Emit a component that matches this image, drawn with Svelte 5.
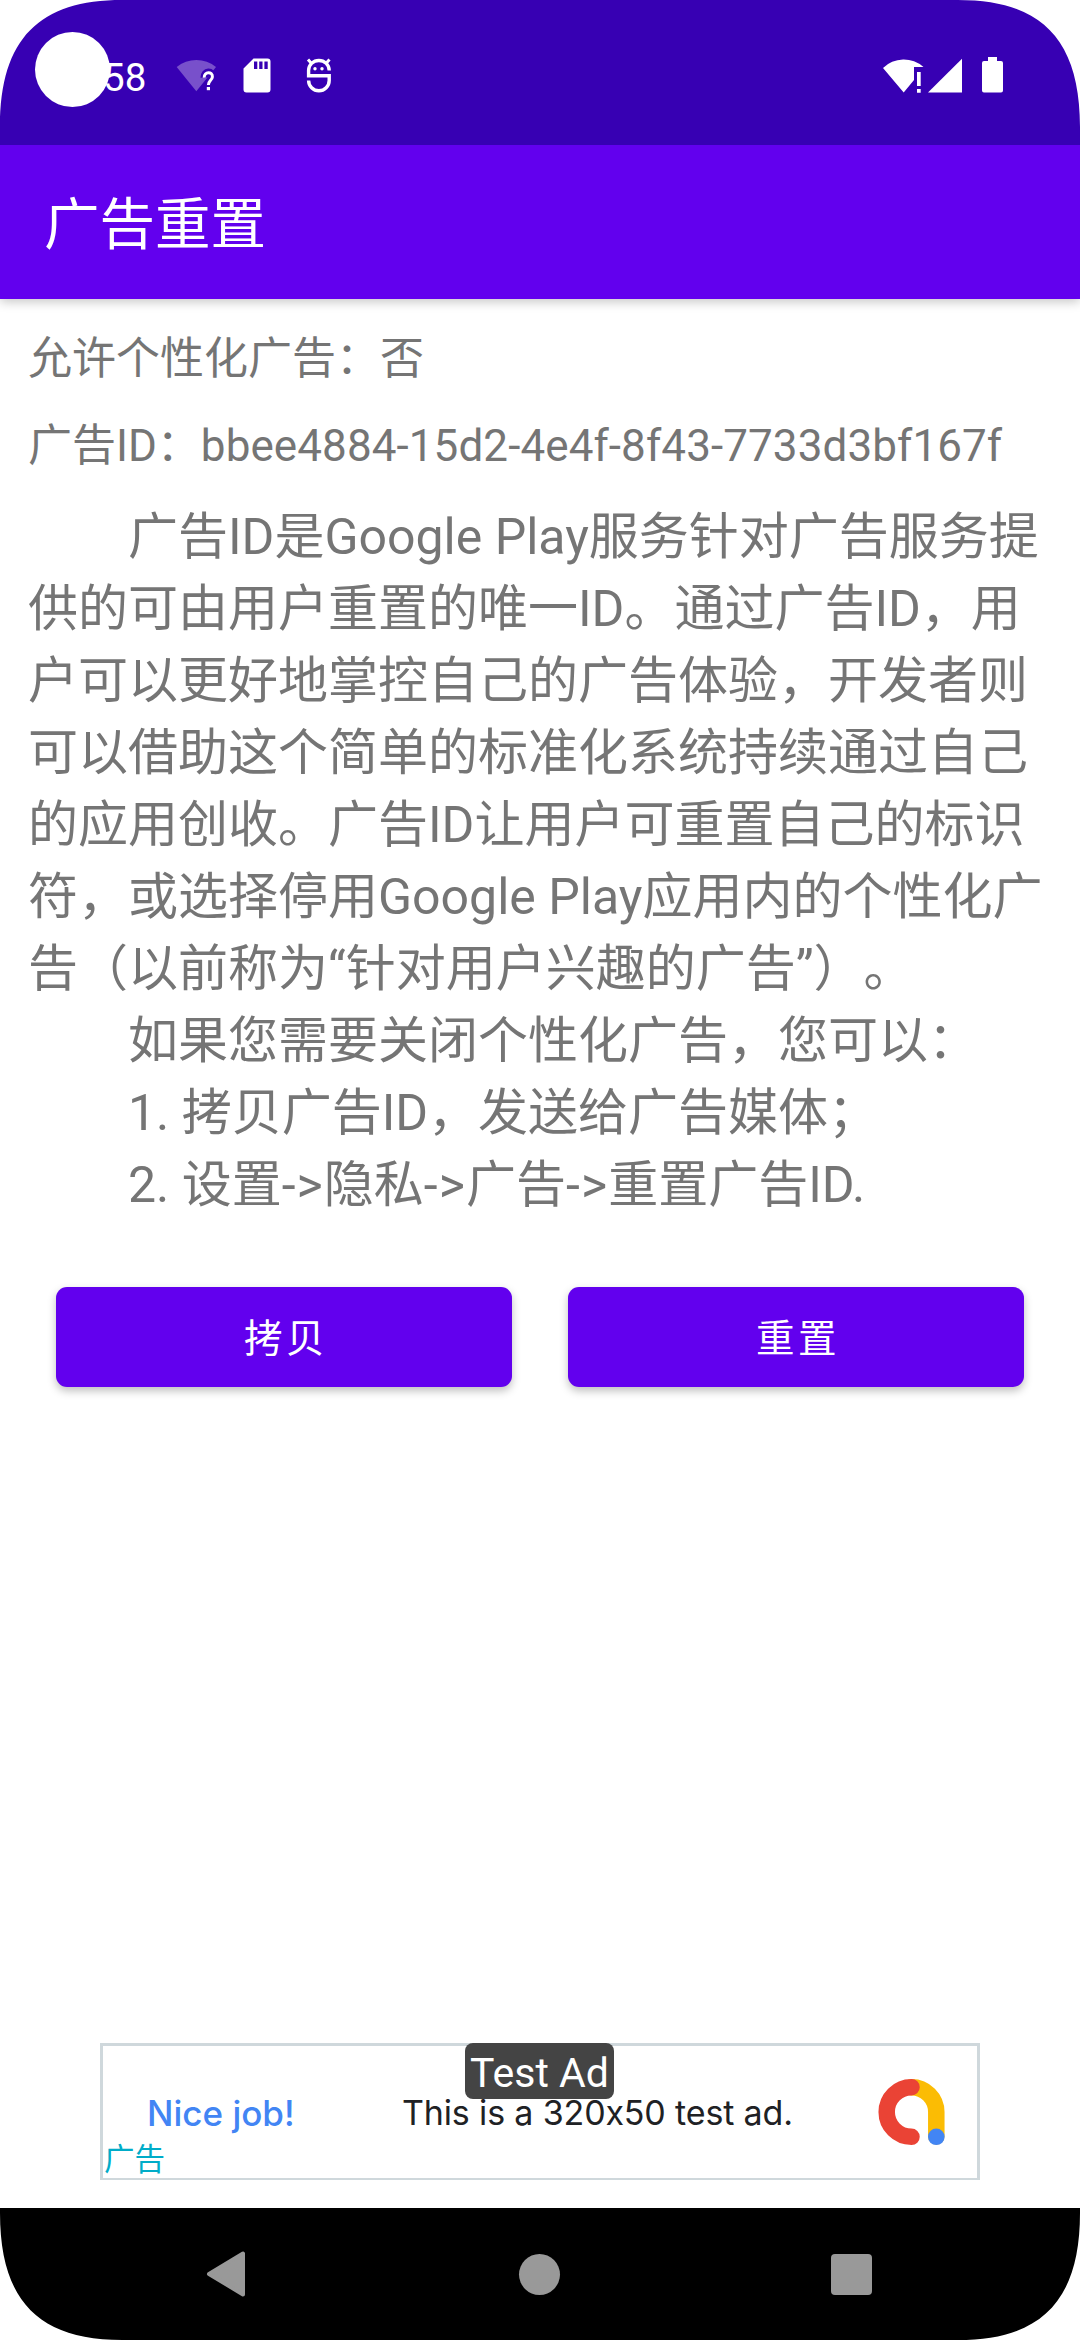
<script>
    let allowed = "否";
    let adId = "bbee4884-15d2-4e4f-8f43-7733d3bf167f";

    let lines = [
        { text: "广告ID是Google Play服务针对广告服务提", indent: true },
        { text: "供的可由用户重置的唯一ID。通过广告ID，用" },
        { text: "户可以更好地掌控自己的广告体验，开发者则" },
        { text: "可以借助这个简单的标准化系统持续通过自己" },
        { text: "的应用创收。广告ID让用户可重置自己的标识" },
        { text: "符，或选择停用Google Play应用内的个性化广" },
        { text: "告（以前称为“针对用户兴趣的广告”）。" },
        { text: "如果您需要关闭个性化广告，您可以：", indent: true },
        { text: "1. 拷贝广告ID，发送给广告媒体；", indent: true }
    ];

    let path = ["设置", "隐私", "广告", "重置广告ID."];
</script>

<div class="screen">
    <div class="status-bar">
        <div class="status-left">
            <span class="clock">58</span>
            <svg class="wifi-unknown" width="42" height="36" viewBox="0 0 42 36">
                <path d="M.7 9A31.1 31.1 0 0 1 40 9L20.3 33.3z" fill="#7850cb" />
                <g fill="none" stroke="#3700b3" stroke-width="7.5">
                    <path d="M28.2 19.6C28 12.6 36.8 12.8 36.4 18.8C36.2 22.2 32.4 22.5 32.4 27" />
                    <path d="M32.4 27v7" />
                </g>
                <path d="M28.2 19.6C28 13.3 36.8 13.3 36.4 18.8C36.2 22.2 32.4 22.5 32.4 27" fill="none" stroke="#fff" stroke-width="3" />
                <path d="M30.8 29h3.2v3.2h-3.2z" fill="#fff" />
            </svg>
            <svg class="sd-card" width="28" height="36" viewBox="0 0 28 36">
                <path d="M10.5.5H24.5a3 3 0 0 1 3 3v28a3 3 0 0 1-3 3H3.5a3 3 0 0 1-3-3V10.5z" fill="#fff" />
                <path d="M11 3.5h3.3v7.5H11zM16.2 3.5h3.3v7.5h-3.3zM21.4 3.5h3.3v7.5h-3.3z" fill="#3700b3" />
            </svg>
            <svg class="debug" width="26" height="36" viewBox="0 0 26 36">
                <path d="M23.2 12.5v-.2a10.3 9.8 0 0 0-20.6 0v5.5h20.6v4.7a10.3 10.3 0 0 1-20.6 0" fill="none" stroke="#fff" stroke-width="3.4" />
                <path d="M2 1.5l4 4.5M23.5 1.5l-4 4.5" stroke="#fff" stroke-width="3" />
                <circle cx="9" cy="10.7" r="1.7" fill="#fff" />
                <circle cx="16" cy="10.7" r="1.7" fill="#fff" />
            </svg>
        </div>
        <div class="status-right">
            <svg class="wifi" width="41" height="36" viewBox="0 0 41 36">
                <path d="M0 10A29.5 29.5 0 0 1 40.5 9H31V22L20.7 34.5z" fill="#fff" />
                <path d="M34 14h3.7v14H34zM34 31h3.7v3.7H34z" fill="#fff" />
            </svg>
            <svg class="signal" width="35" height="36" viewBox="0 0 35 36">
                <path d="M34 .7V34.6H0z" fill="#fff" />
            </svg>
            <svg class="battery" width="21" height="36" viewBox="0 0 21 36">
                <path d="M6 0h9v4h4a2 2 0 0 1 2 2v27.6a2 2 0 0 1-2 2H2a2 2 0 0 1-2-2V6a2 2 0 0 1 2-2h4z" fill="#fff" />
            </svg>
        </div>
        <div class="camera"></div>
    </div>

    <header class="app-bar">
        <h1>广告重置</h1>
    </header>

    <main>
        <p class="info">允许个性化广告：{allowed}</p>
        <p class="info">广告ID：<span class="ad-id">{adId}</span></p>
        <div class="description">
            {#each lines as line}
                <p class:indent={line.indent}>{line.text}</p>
            {/each}
            <p class="indent">2. {#each path as step, i}{#if i > 0}<span class="arrow">-&gt;</span>{/if}{step}{/each}</p>
        </div>
        <div class="buttons">
            <button>拷贝</button>
            <button>重置</button>
        </div>
    </main>

    <div class="ad">
        <span class="ad-title">Nice job!</span>
        <span class="ad-text">This is a 320x50 test ad.</span>
        <svg class="ad-logo" width="68" height="68" viewBox="0 0 68 68">
            <g fill="none" stroke-width="16.5" stroke-linecap="round">
                <path d="M33.5 9.2A24.8 24.8 0 0 1 58.3 34V58.5" stroke="#fbbc04" />
                <path d="M33.5 9.2a24.8 24.8 0 0 0 0 49.6" stroke="#ea4335" />
            </g>
            <circle cx="58.3" cy="58.8" r="8.3" fill="#4285f4" />
        </svg>
        <span class="ad-badge">Test Ad</span>
        <span class="ad-mark">广告</span>
    </div>

    <nav>
        <svg width="41" height="46" viewBox="0 0 41 46">
            <path d="M3 23L37 2.5V43.5z" fill="#999" stroke="#999" stroke-width="4" stroke-linejoin="round" />
        </svg>
        <div class="home"></div>
        <div class="recents"></div>
    </nav>

    <svg class="corner top-left" viewBox="0 0 127 127"><path d="M0 0H122C40 0 0 38 0 127z" /></svg>
    <svg class="corner top-right" viewBox="0 0 127 127"><path d="M0 0H122C40 0 0 38 0 127z" /></svg>
    <svg class="corner bottom-left" viewBox="0 0 127 127"><path d="M0 0H122C40 0 0 38 0 127z" /></svg>
    <svg class="corner bottom-right" viewBox="0 0 127 127"><path d="M0 0H122C40 0 0 38 0 127z" /></svg>
</div>

<style>
    :global(body){
        margin: 0;
        background: #fff;
    }
    .screen{
        position: relative;
        display: flex;
        flex-direction: column;
        width: 1080px;
        height: 2340px;
        overflow: hidden;
        background: #fff;
        font-family: Roboto, "Noto Sans CJK SC", sans-serif;
        color: #757575;
    }
    svg{
        display: block;
        flex: none;
    }
    p, h1{
        margin: 0;
        font-weight: 400;
        white-space: nowrap;
        text-spacing-trim: space-all;
    }

    .status-bar{
        position: relative;
        display: flex;
        justify-content: space-between;
        flex: none;
        height: 145px;
        box-sizing: border-box;
        padding: 58px 77px 0 103px;
        background: #3700b3;
        color: #fff;
    }
    .status-left, .status-right{
        display: flex;
        height: 36px;
    }
    .clock{
        width: 73px;
        font-size: 38.5px;
        line-height: 39px;
    }
    .sd-card{
        margin-left: 25px;
    }
    .debug{
        margin-left: 35px;
    }
    .signal{
        margin-left: 4px;
    }
    .battery{
        margin: -1px 0 0 19px;
    }
    .camera{
        position: absolute;
        left: 35px;
        top: 32px;
        width: 75px;
        height: 75px;
        border-radius: 50%;
        background: #fff;
    }

    .app-bar{
        display: flex;
        align-items: center;
        flex: none;
        height: 154px;
        box-sizing: border-box;
        padding: 7px 0 0 44px;
        background: #6200ee;
        color: #fff;
        box-shadow: 0 3px 10px rgba(0,0,0,0.22);
    }
    h1{
        font-size: 55.5px;
        line-height: 64px;
    }

    main{
        flex: 1;
        padding: 30px 28px 0;
    }
    .info{
        height: 60px;
        margin-bottom: 27px;
        font-size: 44px;
        line-height: 60px;
    }
    .info + .info{
        margin-bottom: 25px;
    }
    .ad-id{
        letter-spacing: 0.09px;
    }
    .description{
        font-size: 50px;
        line-height: 72px;
    }
    .description p{
        height: 72px;
    }
    .indent{
        padding-left: 100px;
    }
    .arrow{
        font-kerning: none;
        letter-spacing: 1.1px;
    }
    .buttons{
        display: flex;
        gap: 56px;
        padding: 66px 28px 0;
    }
    button{
        flex: 1;
        height: 100px;
        border: 0;
        border-radius: 11px;
        padding: 0 0 5px 4px;
        background: #6200ee;
        color: #fff;
        font: 400 38.5px Roboto, "Noto Sans CJK SC", sans-serif;
        letter-spacing: 3.4px;
        box-shadow: 0 4px 8px rgba(0,0,0,0.25);
    }

    .ad{
        position: relative;
        display: flex;
        align-items: center;
        flex: none;
        width: 880px;
        height: 137px;
        box-sizing: border-box;
        margin: 0 auto 28px;
        border: 3px solid #cfd8dc;
        border-bottom-width: 2px;
        font-family: Inter, sans-serif;
        font-feature-settings: "calt" 0;
        line-height: 1;
        white-space: nowrap;
    }
    .ad-title{
        width: 254px;
        padding: 2px 0 0 44px;
        font-size: 35px;
        font-weight: 500;
        color: #4285f4;
    }
    .ad-text{
        width: 476px;
        padding: 2px 0 0 1px;
        font-size: 34px;
        letter-spacing: -0.15px;
        color: #202124;
    }
    .ad-badge{
        position: absolute;
        left: 362px;
        top: -3px;
        width: 149px;
        height: 56px;
        box-sizing: border-box;
        padding-top: 9px;
        border-radius: 8px;
        background: #444;
        color: #fff;
        font: 41px/42px Roboto, sans-serif;
        text-align: center;
    }
    .ad-mark{
        position: absolute;
        left: 1px;
        bottom: 3px;
        font: 30.5px/36px "Noto Sans CJK SC", sans-serif;
        color: #00acc8;
    }

    nav{
        display: flex;
        align-items: center;
        justify-content: space-between;
        flex: none;
        height: 132px;
        box-sizing: border-box;
        padding: 0 208px 0 206px;
        background: #000;
    }
    .home, .recents{
        width: 41px;
        height: 41px;
        background: #999;
    }
    .home{
        border-radius: 50%;
    }
    .recents{
        border-radius: 4px;
    }

    .corner{
        position: absolute;
        width: 127px;
        height: 127px;
        fill: #fff;
    }
    .top-left{
        left: 0;
        top: 0;
    }
    .top-right{
        right: 0;
        top: 0;
        transform: scaleX(-1);
    }
    .bottom-left{
        left: 0;
        bottom: 0;
        transform: scaleY(-1);
    }
    .bottom-right{
        right: 0;
        bottom: 0;
        transform: scale(-1);
    }
</style>
